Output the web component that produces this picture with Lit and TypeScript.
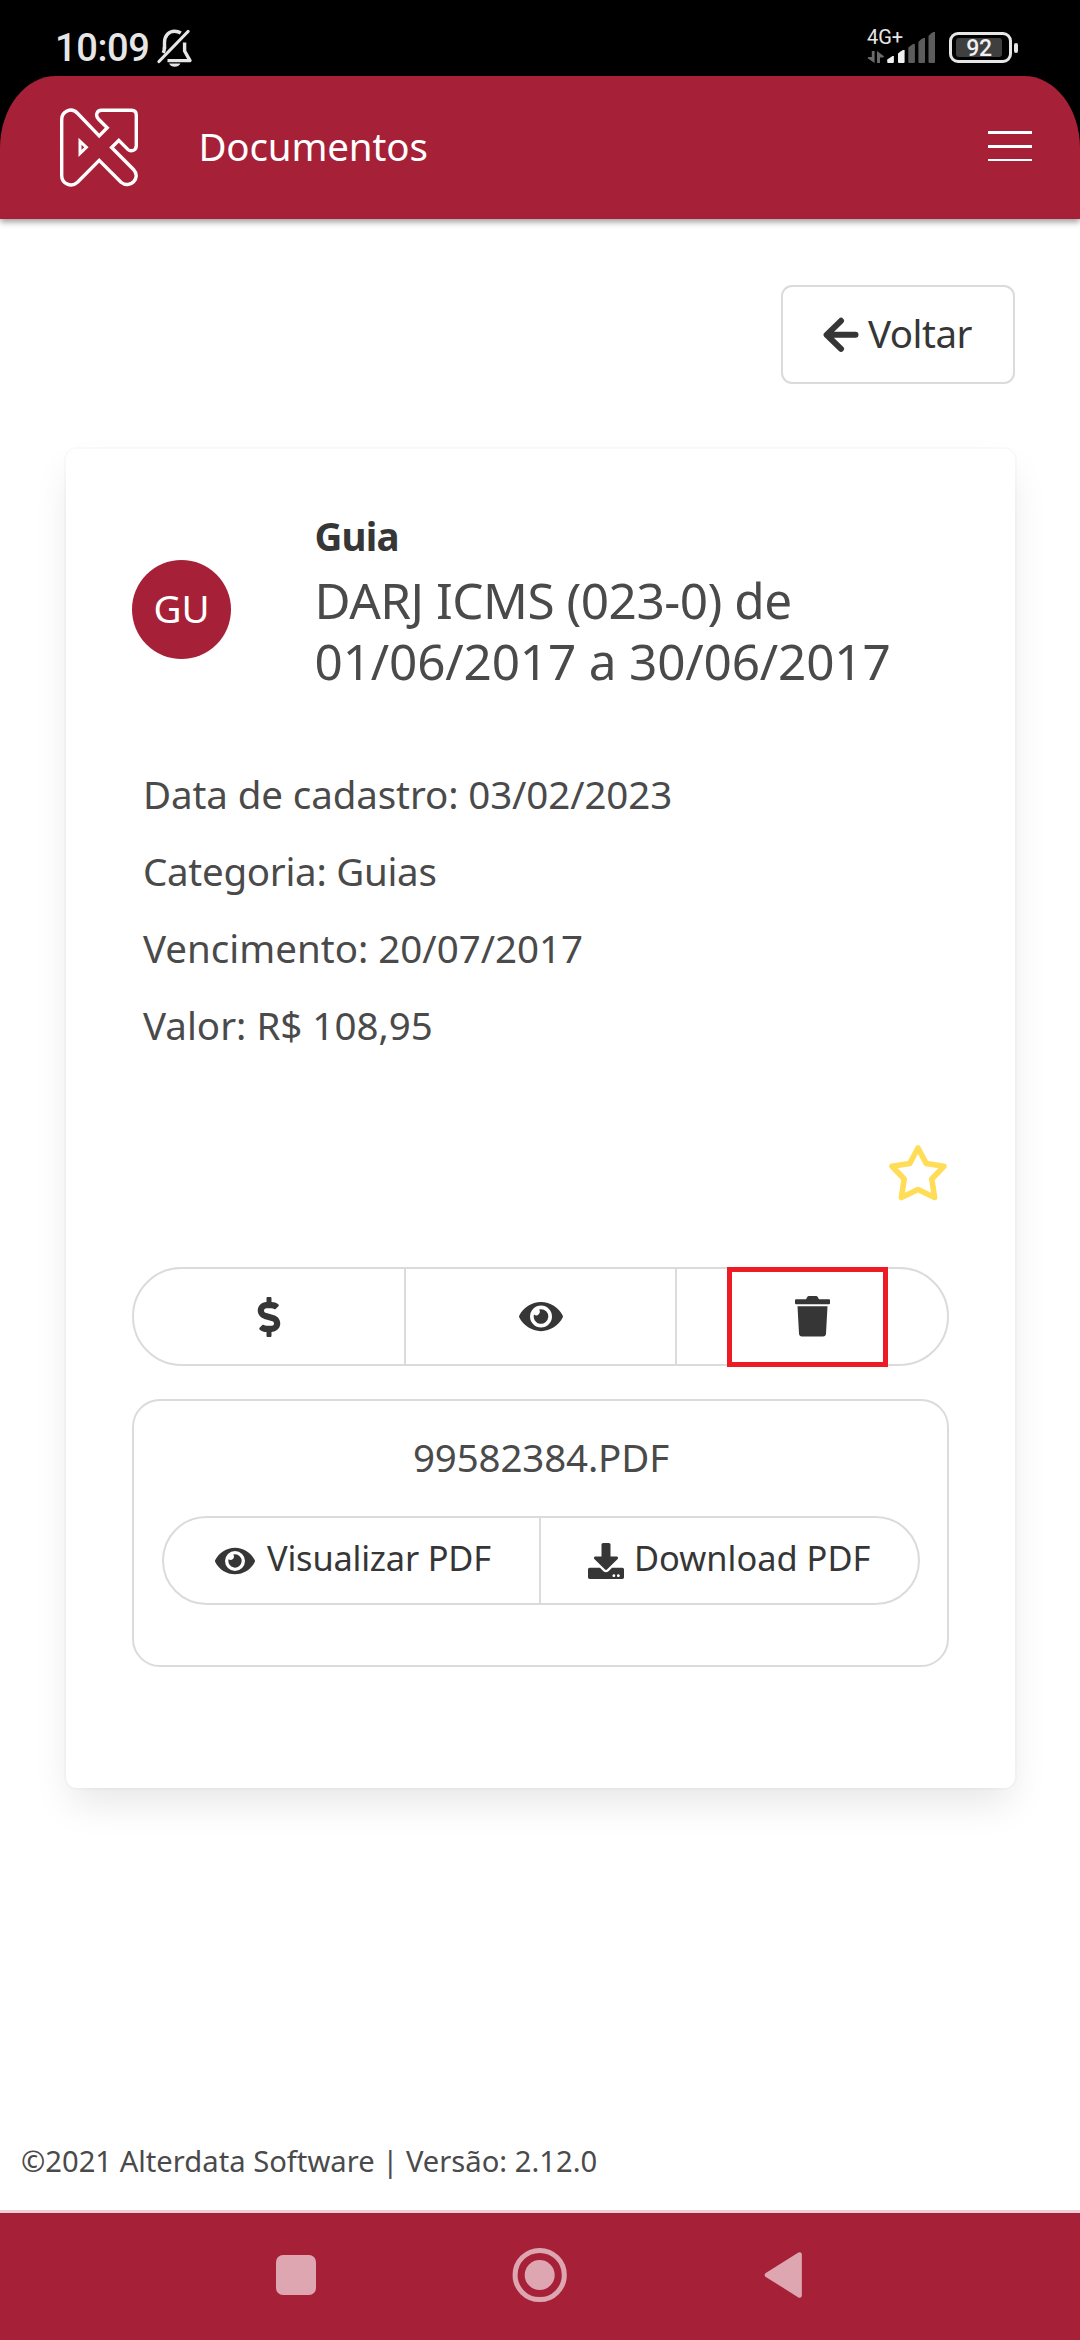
import { LitElement, html, css, svg } from "lit";
import { customElement } from "lit/decorators.js";

const eye = svg`<path d="M572.52 241.4C518.29 135.59 410.93 64 288 64S57.68 135.64 3.48 241.41a32.35 32.35 0 0 0 0 29.19C57.71 376.41 165.07 448 288 448s230.32-71.64 284.52-177.41a32.35 32.35 0 0 0 0-29.19zM288 400a144 144 0 1 1 144-144 143.93 143.93 0 0 1-144 144zm0-240a95.31 95.31 0 0 0-25.31 3.79 47.85 47.85 0 0 1-66.9 66.9A95.78 95.78 0 1 0 288 160z"/>`;
const dollar = svg`<path d="M209.2 233.4l-108-31.6C88.7 198.2 80 186.5 80 173.5c0-16.3 13.2-29.5 29.5-29.5h66.3c12.2 0 24.2 3.7 34.2 10.5 6.1 4.1 14.3 3.1 19.5-2l34.8-34c7.1-6.9 6.1-18.4-1.8-24.5C238 74.8 207.4 64.1 176 64V16c0-8.8-7.2-16-16-16h-32c-8.8 0-16 7.2-16 16v48h-2.5C45.8 64-5.4 118.7.5 183.6c4.2 46.1 39.4 83.6 83.8 96.6l102.5 30c12.5 3.7 21.2 15.3 21.2 28.3 0 16.3-13.2 29.5-29.5 29.5h-66.3C100 368 88 364.3 78 357.5c-6.1-4.1-14.3-3.1-19.5 2l-34.8 34c-7.1 6.9-6.1 18.4 1.8 24.5 24.5 19.2 55.1 29.9 86.5 30v48c0 8.8 7.2 16 16 16h32c8.8 0 16-7.2 16-16v-48.2c46.6-.9 90.3-28.6 105.7-72.7 21.5-61.6-14.6-124.8-72.5-141.7z"/>`;
const download = svg`<path d="M216 0h80c13.3 0 24 10.7 24 24v168h87.7c17.8 0 26.7 21.5 14.1 34.1L269.7 378.3c-7.5 7.5-19.8 7.5-27.3 0L90.1 226.1c-12.6-12.6-3.7-34.1 14.1-34.1H192V24c0-13.3 10.7-24 24-24zm296 376v112c0 13.3-10.7 24-24 24H24c-13.3 0-24-10.7-24-24V376c0-13.3 10.7-24 24-24h146.7l49 49c20.1 20.1 52.5 20.1 72.6 0l49-49H488c13.3 0 24 10.7 24 24zm-124 88c0-11-9-20-20-20s-20 9-20 20 9 20 20 20 20-9 20-20zm64 0c0-11-9-20-20-20s-20 9-20 20 9 20 20 20 20-9 20-20z"/>`;

@customElement("status-bar")
export class StatusBar extends LitElement {
  static styles = css`
    :host { display: flex; height: 76px; box-sizing: border-box; background: #000; color: #e6e6e6; font-family: Roboto, sans-serif; }
    .clock { padding: 26px 0 0 55px; font-size: 38px; line-height: 45px; font-weight: 500; letter-spacing: -0.4px; width: 157px; box-sizing: border-box; white-space: nowrap; }
    .bell { width: 36px; height: 40px; margin-top: 28px; }
    .right { margin-left: auto; display: flex; padding-right: 62px; }
    .net { width: 36px; padding-top: 27px; }
    .tech { font-size: 20px; line-height: 20px; height: 24px; }
    .arrows { display: block; width: 18px; height: 12px; }
    .bars { width: 48px; height: 32px; margin: 31px 14px 0 -16px; }
    .level { display: flex; align-items: center; margin-top: 32px; height: 31px; }
    .shell { box-sizing: border-box; width: 63px; height: 31px; border: 3px solid #e6e6e6; border-radius: 9px; padding: 3px 4px; }
    .fill { width: 46px; height: 19px; background: #3f3f3f; border-radius: 3px; font-size: 23px; line-height: 21px; font-weight: 500; text-align: center; color: #f0f0f0; letter-spacing: -0.2px; }
    .knob { width: 4px; height: 10px; border-radius: 2px; background: #e6e6e6; margin-left: 2px; }
  `;
  render() {
    return html`
      <div class="clock">10:09</div>
      <svg class="bell" viewBox="0 0 36 40" fill="none" stroke="#e6e6e6" stroke-width="3.4">
        <path d="M7.5 21V14.5C7.5 7.5 12 3.2 17.5 3.2C20 3.2 22 3.8 23.8 5"/>
        <path d="M27.6 14.5V23L33 32.6H10.5" stroke-linejoin="round"/>
        <path d="M7.5 19Q7.4 22.5 6.2 25"/>
        <path d="M31 3.5L2 33.5" stroke-linecap="round" stroke-width="3.2"/>
        <path d="M12 35.6H23.5Q21.5 38.8 17.7 38.8T12 35.6Z" fill="#e6e6e6" stroke="none"/>
      </svg>
      <div class="right">
        <div class="net">
          <div class="tech">4G+</div>
          <svg class="arrows" viewBox="0 0 18 12" fill="#6a6a6a"><path d="M4.8 0H7.6V12L0.6 7.2L1.2 6H4.8ZM10 0L17 5.2L16.2 6.4H13V12H10Z"/></svg>
        </div>
        <svg class="bars" viewBox="0 0 48 32">
          <g fill="#f0f0f0"><path d="M0.2 30V28.5Q3 26.5 5.5 25H6.9V31Q6.9 32 5.9 32H1.2Q.2 32 .2 31Z"/><path d="M11 22.5Q13.5 20 16 19H17.6V31Q17.6 32 16.6 32H12Q11 32 11 31Z"/></g>
          <g fill="#5c5c5c"><path d="M21.3 16.5Q24 14 26.2 13H27.9V31Q27.9 32 26.9 32H22.3Q21.3 32 21.3 31Z"/><path d="M31.4 11Q34 8 36.3 7H38V31Q38 32 37 32H32.4Q31.4 32 31.4 31Z"/><path d="M41.5 5Q44 2 46.4 1H48V31Q48 32 47 32H42.5Q41.5 32 41.5 31Z"/></g>
        </svg>
        <div class="level"><div class="shell"><div class="fill">92</div></div><div class="knob"></div></div>
      </div>`;
  }
}

@customElement("top-bar")
export class TopBar extends LitElement {
  static styles = css`
    :host { display: block; height: 143px; background: linear-gradient(#000 75px, #a62138 75px); box-shadow: 0 3px 6px rgba(10, 10, 10, 0.4); position: relative; }
    .bar { display: flex; align-items: flex-start; height: 143px; background: #a62138; border-radius: 56px 56px 0 0 / 72px 72px 0 0; }
    .logo { width: 82px; height: 82px; margin: 30px 0 0 58px; }
    .title { margin: 42px 0 0 58.4px; font-size: 38.5px; line-height: 56px; letter-spacing: -0.15px; color: #fff; }
    .burger { margin: 55px 48px 0 auto; width: 44px; height: 30px; }
  `;
  render() {
    return html`<div class="bar">
      <svg class="logo" viewBox="58 106 82 82" fill="none" stroke="#fff" stroke-width="3.4">
        <path d="M61.7 119.5C61.7 111 71.5 107 77.5 113.2L99.2 135.9L107.2 127.8L98.6 119.2C94.8 115.3 97 110.2 101.5 110.2H131.5Q136.3 110.2 136.3 115V145.5C136.3 151 130.5 152 127.8 149.4L118.8 140.3L111.6 147.5L133.5 169.5C141.5 178 130 189.5 121 182.2L99.2 160.4L77.5 182.2C71.5 187.8 61.7 184 61.7 175.5Z"/>
        <path d="M80 141.2V153.4L86.4 147.3Z" stroke-width="3"/>
      </svg>
      <div class="title">Documentos</div>
      <svg class="burger" viewBox="0 0 44 30" fill="#fff"><path d="M0 0H44V3H0ZM0 14H44V17H0ZM0 28H44V30H0Z"/></svg>
    </div>`;
  }
}

@customElement("app-root")
export class AppRoot extends LitElement {
  static styles = css`
    :host { display: flex; flex-direction: column; height: 2340px; width: 1080px; overflow: hidden; background: #fff; font-family: "Noto Sans", sans-serif; font-size: 38.5px; color: #4a4a4a; }
    svg { display: block; flex: none; }
    .main { flex: 1; padding: 66px 65px 0 66px; display: flex; flex-direction: column; }
    .back { align-self: flex-end; box-sizing: border-box; width: 234px; height: 99px; border: 2px solid #dbdbdb; border-radius: 11px; display: flex; align-items: center; padding-left: 39.5px; gap: 9.5px; color: #363636; letter-spacing: -0.5px; }
    .back span { line-height: 56px; padding-bottom: 3px; }
    .arrow { width: 36px; height: 36px; }
    .card { margin-top: 65px; box-sizing: border-box; height: 1339px; border-radius: 11px; padding: 58px 66px 0; display: flex; flex-direction: column; box-shadow: 0 19px 38.5px -5px rgba(10, 10, 10, 0.1), 0 0 0 2px rgba(10, 10, 10, 0.02); }
    .media { display: flex; }
    .avatar { width: 99px; height: 99px; border-radius: 50%; background: #a62138; color: #fff; margin: 53px 83.5px 0 0; line-height: 96px; text-align: center; }
    .kind { font-weight: 700; line-height: 58px; letter-spacing: -0.8px; color: #363636; }
    .title { font-size: 49.5px; line-height: 61px; margin-top: 4.5px; white-space: nowrap; }
    .subject { letter-spacing: -0.5px; }
    .period { letter-spacing: -0.18px; }
    .details { margin: 64.5px 0 0 11px; line-height: 77px; }
    .details :nth-child(1) { letter-spacing: -0.1px; }
    .details :nth-child(2) { letter-spacing: -0.28px; }
    .star { align-self: flex-end; width: 58px; height: 56px; margin: 81px 2px 66px 0; }
    .group { display: flex; box-sizing: border-box; border: 2px solid #dbdbdb; border-radius: 50px; color: #363636; fill: #363636; }
    .actions { height: 99px; }
    .cell { flex: 1; display: flex; align-items: center; justify-content: center; position: relative; }
    .cell + .cell { border-left: 2px solid #dbdbdb; }
    .mark { position: absolute; left: 50px; top: -2px; width: 161px; height: 100px; box-sizing: border-box; border: 5px solid #ed1c24; }
    .file { margin-top: 33px; height: 268px; box-sizing: border-box; border: 2px solid #dbdbdb; border-radius: 28px; padding: 26px 27px 0 28px; }
    .name { line-height: 60px; text-align: center; letter-spacing: -0.15px; margin-bottom: 29px; }
    .pdf { height: 89px; font-size: 34.4px; }
    .pdf .cell { justify-content: flex-start; white-space: nowrap; box-sizing: border-box; }
    .pdf span { line-height: 50px; padding-bottom: 6px; }
    .pdf .view { flex: 0 0 375px; padding-left: 51px; gap: 12px; letter-spacing: -0.2px; }
    .down { padding-left: 47px; gap: 10px; }
    .footer { padding: 0 0 19px 21px; font-size: 29.2px; line-height: 60px; white-space: nowrap; }
    .nav { box-sizing: border-box; height: 130px; border-top: 3px solid #ecd0d5; background: #a62138; }
  `;
  private details = ["Data de cadastro: 03/02/2023", "Categoria: Guias", "Vencimento: 20/07/2017", "Valor: R$ 108,95"];
  render() {
    return html`
      <status-bar></status-bar>
      <top-bar></top-bar>
      <div class="main">
        <div class="back">
          <svg class="arrow" viewBox="0 0 36 36" fill="none" stroke="#363636" stroke-width="6" stroke-linecap="round" stroke-linejoin="round"><path d="M18 3.8L3.6 17.8L18 31.8M4 17.8H32.5"/></svg>
          <span>Voltar</span>
        </div>
        <div class="card">
          <div class="media">
            <div class="avatar">GU</div>
            <div>
              <div class="kind">Guia</div>
              <div class="title"><span class="subject">DARJ ICMS (023-0) de</span><br><span class="period">01/06/2017 a 30/06/2017</span></div>
            </div>
          </div>
          <div class="details">${this.details.map((d) => html`<div>${d}</div>`)}</div>
          <svg class="star" viewBox="0 0 58 56" fill="none" stroke="#ffdd57" stroke-width="5.6" stroke-linejoin="round"><path d="M29 3L37.3 18.6L55 21.3L42.8 34L45.6 52.6L29 44.6L12.4 52.6L15.2 34L3 21.3L20.7 18.6Z"/></svg>
          <div class="group actions">
            <div class="cell"><svg width="24" height="40" viewBox="-8 0 304 512">${dollar}</svg></div>
            <div class="cell"><svg width="44" height="39" viewBox="0 0 576 512">${eye}</svg></div>
            <div class="cell">
              <svg width="35" height="41" viewBox="0 0 35 41"><path d="M1 3.2H11L12 1.4Q12.6 0 14 0H21Q22.4 0 23 1.4L24 3.2H34Q35 3.2 35 4.2V7.2Q35 8.2 34 8.2H1Q0 8.2 0 7.2V4.2Q0 3.2 1 3.2ZM2.5 10.3H32.5L31 37.5Q30.8 40.4 28 40.4H7Q4.2 40.4 4 37.5Z"/></svg>
              <div class="mark"></div>
            </div>
          </div>
          <div class="file">
            <div class="name">99582384.PDF</div>
            <div class="group pdf">
              <div class="cell view"><svg width="40" height="36" viewBox="0 0 576 512">${eye}</svg><span>Visualizar PDF</span></div>
              <div class="cell down"><svg width="36" height="36" viewBox="0 0 512 512">${download}</svg><span>Download PDF</span></div>
            </div>
          </div>
        </div>
      </div>
      <div class="footer">©2021 Alterdata Software | Versão: 2.12.0</div>
      <svg class="nav" width="1080" height="130" viewBox="0 2213 1080 127" fill="#dda6b1">
        <rect x="276" y="2255" width="40" height="40" rx="7"/>
        <circle cx="539.7" cy="2275" r="24.6" fill="none" stroke="#dda6b1" stroke-width="5"/>
        <circle cx="539.7" cy="2275" r="15"/>
        <path d="M767 2275L799.6 2254.5V2295.5Z" stroke="#dda6b1" stroke-width="4.5" stroke-linejoin="round"/>
      </svg>`;
  }
}
